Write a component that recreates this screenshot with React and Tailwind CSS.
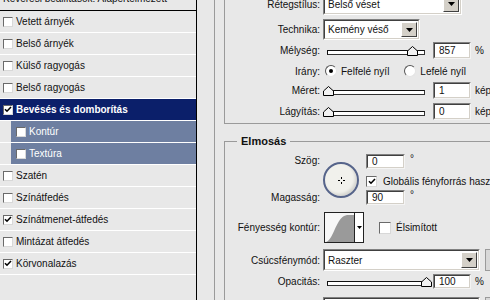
import React from 'react';

const font = { fontFamily: '"Liberation Sans", Arial, sans-serif' };

const Check = ({ checked, size = 'w-[10px] h-[10px]' }) => (
  <span className={`${size} shrink-0 flex items-center justify-center bg-white border border-t-[#6a6a6a] border-l-[#6a6a6a] border-b-[#d8d8d8] border-r-[#d8d8d8]`}>
    {checked && (
      <svg width="8" height="7" viewBox="0 0 8 7">
        <path d="M1 3.2 L3 5.2 L7 1" stroke="#000" strokeWidth="1.6" fill="none" />
      </svg>
    )}
  </span>
);

const Radio = ({ checked }) => (
  <span className="w-[12px] h-[12px] shrink-0 rounded-full bg-white border border-t-[#555] border-l-[#555] border-b-[#e4e4e4] border-r-[#e4e4e4] flex items-center justify-center">
    {checked && <span className="w-[4px] h-[4px] rounded-full bg-black" />}
  </span>
);

const Arrow = () => (
  <span className="w-[16px] self-stretch my-[1px] mr-[1px] bg-[#d4d0c8] border border-t-white border-l-white border-b-[#404040] border-r-[#404040] flex items-center justify-center">
    <svg width="7" height="4" viewBox="0 0 7 4"><path d="M0 0 H7 L3.5 4 Z" fill="#000" /></svg>
  </span>
);

const Select = ({ value, w, h = 'h-[22px]' }) => (
  <div className={`${w} ${h} shrink-0 flex border border-t-[#808080] border-l-[#808080] border-b-white border-r-white`}>
    <div className="flex-1 flex bg-white border border-t-[#404040] border-l-[#404040] border-b-[#d4d0c8] border-r-[#d4d0c8]">
      <span className="flex-1 flex items-center pl-[3px] whitespace-nowrap">{value}</span>
      <Arrow />
    </div>
  </div>
);

const Field = ({ value, w = 'w-[38px]', h = 'h-[17px]' }) => (
  <div className={`${w} ${h} shrink-0 flex bg-white border border-t-[#808080] border-l-[#808080] border-b-[#f4f4f4] border-r-[#f4f4f4]`}>
    <span className="flex-1 flex items-center pl-[4px] border border-t-[#404040] border-l-[#404040] border-b-[#d4d0c8] border-r-[#d4d0c8]">{value}</span>
  </div>
);

const Slider = ({ thumb }) => (
  <div className="relative w-[98px] h-[10px] shrink-0">
    <div className="absolute left-0 right-0 bottom-[1px] h-[5px] bg-white border border-t-[#111] border-l-[#111] border-b-[#333] border-r-[#333]" />
    <svg className={`absolute bottom-0 ${thumb}`} width="11" height="10" viewBox="0 0 11 10">
      <path d="M0.5 9.5 V5 L5.5 0.5 L10.5 5 V9.5 Z" fill="#f2f2f2" stroke="#000" />
    </svg>
  </div>
);

const Label = ({ children }) => (
  <span className="w-[95px] shrink-0 text-right whitespace-nowrap">{children}</span>
);

const effects = [
  { name: 'Vetett árnyék' },
  { name: 'Belső árnyék' },
  { name: 'Külső ragyogás' },
  { name: 'Belső ragyogás' },
  { name: 'Bevésés és domborítás', checked: true, active: true },
  { name: 'Kontúr', sub: true },
  { name: 'Textúra', sub: true },
  { name: 'Szatén' },
  { name: 'Színátfedés' },
  { name: 'Színátmenet-átfedés', checked: true },
  { name: 'Mintázat átfedés' },
  { name: 'Körvonalazás', checked: true },
];

const App = () => (
  <div className="w-[490px] h-[300px] overflow-hidden flex bg-[#e8e8e8] text-[10px] text-[#111]" style={font}>
    <div className="w-[197px] shrink-0 h-full border-r border-black flex flex-col">
      <div className="-mt-[9px] h-[20px] shrink-0 border-b border-black pl-[3px] pt-[2px] leading-[12px] whitespace-nowrap">
        Keverési beállítások: Alapértelmezett
      </div>
      {effects.map((item) => (
        <div key={item.name} className="h-[22px] shrink-0 border-b border-white flex">
          {item.sub ? (
            <div className="ml-[11px] flex-1 bg-[#6e7fa1] text-white flex items-center pl-[5px]">
              <Check />
              <span className="ml-[3px]">{item.name}</span>
            </div>
          ) : (
            <div className={`flex-1 flex items-center pl-[3px] ${item.active ? 'bg-[#0b1f6a] text-white font-bold' : ''}`}>
              <Check checked={item.checked} />
              <span className="ml-[3px] whitespace-nowrap">{item.name}</span>
            </div>
          )}
        </div>
      ))}
    </div>

    <div className="flex-1 h-full pl-[17px] overflow-hidden">
      <div className="h-full border-l border-[#9a9a9a] pl-[9px] flex flex-col">
        <div className="-mt-[7px] border-l border-b border-[#9a9a9a] pb-[3px] flex flex-col">
          <div className="h-[22px] flex items-center">
            <Label>Rétegstílus:</Label>
            <div className="ml-[3px]"><Select value="Belső véset" w="w-[139px]" /></div>
          </div>
          <div className="mt-[4px] h-[21px] flex items-center">
            <Label>Technika:</Label>
            <div className="ml-[3px]"><Select value="Kemény véső" w="w-[97px]" h="h-[21px]" /></div>
          </div>
          <div className="mt-[2px] h-[17px] flex items-center">
            <Label>Mélység:</Label>
            <div className="ml-[7px]"><Slider thumb="left-[80px]" /></div>
            <div className="ml-[8px]"><Field value="857" /></div>
            <span className="ml-[4px]">%</span>
          </div>
          <div className="mt-[3px] h-[18px] flex items-center">
            <Label>Irány:</Label>
            <div className="ml-[5px] flex items-center">
              <Radio checked />
              <span className="ml-[4px]">Felfelé nyíl</span>
              <span className="ml-[15px]"><Radio /></span>
              <span className="ml-[4px]">Lefelé nyíl</span>
            </div>
          </div>
          <div className="mt-[2px] h-[17px] flex items-center">
            <Label>Méret:</Label>
            <div className="ml-[7px]"><Slider thumb="-left-[4px]" /></div>
            <div className="ml-[8px]"><Field value="1" /></div>
            <span className="ml-[4px] whitespace-nowrap">képpont</span>
          </div>
          <div className="mt-[4px] h-[17px] flex items-center">
            <Label>Lágyítás:</Label>
            <div className="ml-[7px]"><Slider thumb="-left-[4px]" /></div>
            <div className="ml-[8px]"><Field value="0" /></div>
            <span className="ml-[4px] whitespace-nowrap">képpont</span>
          </div>
        </div>

        <div className="relative mt-[17px] border-l border-t border-[#9a9a9a] flex flex-col">
          <span className="absolute -top-[7px] left-[12px] px-[4px] bg-[#e8e8e8] font-bold text-[11px] leading-[13px]">Elmosás</span>

          <div className="mt-[12px] flex items-start">
            <div className="w-[95px] h-[51px] shrink-0 flex flex-col justify-between text-right leading-[14px]">
              <span>Szög:</span>
              <span>Magasság:</span>
            </div>
            <div className="ml-[3px] mt-[8px] w-[36px] h-[36px] shrink-0 rounded-full border-2 border-[#56648a] bg-[#f1f1ec] shadow-[inset_-2px_-2px_3px_rgba(0,0,0,0.12)] flex items-center justify-center">
              <svg width="7" height="7" viewBox="0 0 7 7">
                <path d="M3.5 0 V2 M3.5 5 V7 M0 3.5 H2 M5 3.5 H7" stroke="#000" strokeWidth="1" />
              </svg>
            </div>
            <div className="ml-[7px] flex flex-col">
              <div className="flex items-start">
                <Field value="0" w="w-[39px]" h="h-[15px]" />
                <span className="ml-[5px] leading-[10px]">°</span>
              </div>
              <div className="mt-[6px] h-[12px] flex items-center">
                <Check checked size="w-[11px] h-[11px]" />
                <span className="ml-[6px] whitespace-nowrap">Globális fényforrás használata</span>
              </div>
              <div className="mt-[3px] flex items-start">
                <Field value="90" w="w-[39px]" h="h-[15px]" />
                <span className="ml-[5px] leading-[10px]">°</span>
              </div>
            </div>
          </div>

          <div className="mt-[7px] h-[31px] flex items-center">
            <Label>Fényesség kontúr:</Label>
            <div className="ml-[4px] w-[40px] h-[31px] shrink-0 flex border border-[#222] bg-[#f7f7f7]">
              <svg width="29" height="29" viewBox="0 0 29 29">
                <path d="M1 29 C 8 27, 11 7, 19 3 L 22 2 L 29 2 L 29 29 Z" fill="#9a9a9a" />
              </svg>
              <span className="flex-1 border-l border-[#222] bg-white flex items-center justify-center">
                <svg width="5" height="3" viewBox="0 0 5 3"><path d="M0 0 H5 L2.5 3 Z" fill="#000" /></svg>
              </span>
            </div>
            <span className="ml-[15px]"><Check size="w-[12px] h-[12px]" /></span>
            <span className="ml-[5px]">Élsimított</span>
          </div>

          <div className="mt-[6px] h-[22px] flex items-center">
            <Label>Csúcsfénymód:</Label>
            <div className="ml-[3px]"><Select value="Raszter" w="w-[157px]" /></div>
            <div className="ml-[5px] w-[20px] h-[22px] shrink-0 bg-[#d8d8d8] border border-[#9a9a9a]" />
          </div>

          <div className="mt-[3px] h-[15px] flex items-center">
            <Label>Opacitás:</Label>
            <div className="ml-[7px]"><Slider thumb="left-[94px]" /></div>
            <div className="ml-[8px]"><Field value="100" w="w-[38px]" h="h-[15px]" /></div>
            <span className="ml-[4px]">%</span>
          </div>

          <div className="mt-[8px] h-[22px] flex items-center">
            <Label>Árnyékmód:</Label>
            <div className="ml-[3px]"><Select value="Szorzás" w="w-[157px]" /></div>
            <div className="ml-[5px] w-[20px] h-[22px] shrink-0 bg-[#d8d8d8] border border-[#9a9a9a]" />
          </div>
        </div>
      </div>
    </div>
  </div>
);

export default App;
